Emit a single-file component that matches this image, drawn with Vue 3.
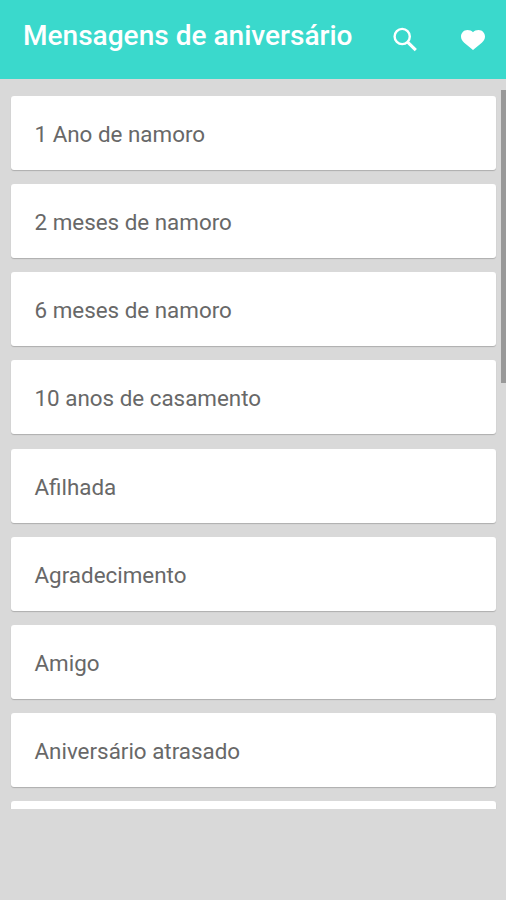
<script setup>
const items = [
  '1 Ano de namoro',
  '2 meses de namoro',
  '6 meses de namoro',
  '10 anos de casamento',
  'Afilhada',
  'Agradecimento',
  'Amigo',
  'Aniversário atrasado',
  '',
]
</script>

<template>
  <div class="screen">
    <header class="bar">
      <h1>Mensagens de aniversário</h1>
      <svg class="search" viewBox="0 0 24 25" fill="none" stroke="#fff">
        <circle cx="9.2" cy="9.5" r="7.6" stroke-width="2.4" />
        <path d="M14.4 14.8L22.8 23.2" stroke-width="3.1" />
      </svg>
      <svg class="heart" viewBox="0 0 24 20" fill="#fff">
        <path d="M12 20L3.2 12.8C1.1 11 0 9 0 6.6C0 2.9 2.8 0 6.4 0C8.7 0 10.8 .8 12 2.2C13.2 .8 15.3 0 17.6 0C21.2 0 24 2.9 24 6.6C24 9 22.9 11 20.8 12.8Z" />
      </svg>
    </header>
    <main class="list">
      <div v-for="(item, i) in items" :key="i" class="card">{{ item }}</div>
      <span class="thumb"></span>
    </main>
  </div>
</template>

<style>
body {
  margin: 0;
  background: #d9d9d9;
}
</style>

<style scoped>
.screen {
  height: 900px;
  overflow: hidden;
  background: #d9d9d9;
  font-family: Roboto, sans-serif;
}
.bar {
  box-sizing: border-box;
  height: 79px;
  display: flex;
  align-items: center;
  padding: 0 21px 0 23px;
  background: #3ad9cc;
  color: #fff;
}
h1 {
  flex: 1;
  margin: 0;
  padding-bottom: 8px;
  font-size: 28.05px;
  line-height: 36px;
  font-weight: 500;
  white-space: nowrap;
}
.search {
  width: 24px;
  height: 25px;
  margin-right: 44px;
}
.heart {
  width: 24px;
  height: 20px;
}
.list {
  position: relative;
  box-sizing: border-box;
  height: 730px;
  padding: 17px 10px 0 11px;
  overflow: hidden;
}
.card {
  box-sizing: border-box;
  height: 74px;
  margin-bottom: 14.15px;
  padding: 2px 23.5px 0;
  display: flex;
  align-items: center;
  border-radius: 3px;
  background: #fff;
  box-shadow: 0 1px 1px rgba(0, 0, 0, 0.2);
  color: #686868;
  font-size: 22.4px;
}
.thumb {
  position: absolute;
  top: 11px;
  right: 0;
  width: 5px;
  height: 293px;
  background: #999;
}
</style>
